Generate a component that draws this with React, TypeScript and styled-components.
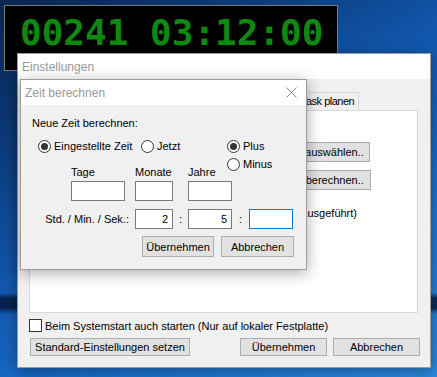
import React from 'react';
import styled, { createGlobalStyle } from 'styled-components';

const GlobalStyle = createGlobalStyle`
  html, body { margin: 0; padding: 0; }
  body {
    width: 437px;
    height: 377px;
    overflow: hidden;
    font-family: "Liberation Sans", Arial, sans-serif;
    font-size: 11px;
    color: #000;
  }
  * { box-sizing: border-box; }
`;

const Desktop = styled.div`
  position: relative;
  width: 437px;
  height: 377px;
  overflow: hidden;
  background:
    linear-gradient(180deg, transparent 0, transparent 293px, rgba(4, 22, 55, 0.8) 298px, rgba(4, 22, 55, 0.8) 308px, transparent 314px),
    linear-gradient(150deg, #0a2450 0%, #0c3a78 22%, #1257ad 45%, #1a70cc 70%, #2c88dc 100%);
`;

/* ---------- Clock window ---------- */
const ClockWindow = styled.div`
  position: absolute;
  left: 4px;
  top: 5px;
  width: 334px;
  height: 66px;
  background: #000;
  border: 1px solid #7a7a7a;
`;

const ClockText = styled.div`
  padding: 9px 0 0 15px;
  font-family: "DejaVu Sans Mono", monospace;
  font-weight: bold;
  font-size: 36px;
  line-height: 36px;
  color: #0f8a10;
  white-space: pre;
`;

/* ---------- Generic window parts ---------- */
const Window = styled.div<{ $left: number; $top: number; $w: number; $h: number }>`
  position: absolute;
  left: ${(p) => p.$left}px;
  top: ${(p) => p.$top}px;
  width: ${(p) => p.$w}px;
  height: ${(p) => p.$h}px;
  display: flex;
  flex-direction: column;
  background: #f0f0f0;
  border: 1px solid #9c9c9c;
  box-shadow: 0 3px 14px rgba(0, 0, 0, 0.35);
`;

const TitleBar = styled.div<{ $h: number }>`
  height: ${(p) => p.$h}px;
  flex: none;
  display: flex;
  align-items: center;
  justify-content: space-between;
  padding: 0 9px 0 4px;
  background: #fff;
  color: #999;
  font-size: 12px;
`;

const TitleText = styled.span`
  padding-top: 1px;
`;

const Button = styled.div<{ $w: number; $h?: number }>`
  width: ${(p) => p.$w}px;
  height: ${(p) => p.$h ?? 21}px;
  flex: none;
  display: flex;
  align-items: center;
  justify-content: center;
  background: #e1e1e1;
  border: 1px solid #adadad;
  white-space: nowrap;
  overflow: hidden;
`;

/* ---------- Settings window ---------- */
const SettingsBody = styled.div`
  flex: 1;
  display: flex;
  flex-direction: column;
  padding: 13px 10px 0 11px;
`;

const TabStrip = styled.div`
  display: flex;
  height: 18px;
  padding-left: 2px;
`;

const Tab = styled.div<{ $w: number }>`
  width: ${(p) => p.$w}px;
  height: 19px;
  flex: none;
  padding: 2px 0 0 4px;
  border: 1px solid #d9d9d9;
  border-bottom: none;
  background: #f0f0f0;
  white-space: nowrap;
  overflow: hidden;
  margin-right: -1px;
  letter-spacing: -0.5px;
`;

const TabPanel = styled.div`
  height: 203px;
  margin-right: 2px;
  background: #fff;
  border: 1px solid #d9d9d9;
  display: flex;
  flex-direction: column;
  padding: 31px 47px 0 10px;
`;

const PanelRow = styled.div<{ $gap: number; $pr?: number }>`
  display: flex;
  justify-content: flex-end;
  align-items: center;
  margin-top: ${(p) => p.$gap}px;
  padding-right: ${(p) => Math.max(p.$pr ?? 0, 0)}px;
  margin-right: ${(p) => Math.min(p.$pr ?? 0, 0)}px;
  white-space: nowrap;
`;

const PanelText = styled.div`
  height: 14px;
  line-height: 14px;
  white-space: nowrap;
`;

const CheckRow = styled.div`
  display: flex;
  align-items: center;
  gap: 3px;
  margin-top: 6px;
  height: 13px;
  white-space: nowrap;
`;

const CheckBox = styled.span`
  width: 13px;
  height: 13px;
  flex: none;
  background: #fff;
  border: 1px solid #333;
`;

const FooterRow = styled.div`
  display: flex;
  align-items: center;
  margin-top: 6px;
  padding-left: 1px;
`;

const FooterRight = styled.div`
  margin-left: auto;
  display: flex;
  gap: 6px;
`;

/* ---------- Dialog ---------- */
const DialogBody = styled.div`
  flex: 1;
  display: flex;
  flex-direction: column;
  padding: 10px 12px 0 11px;
`;

const Heading = styled.div`
  height: 16px;
  line-height: 16px;
`;

const RadioRow = styled.div`
  display: flex;
  align-items: flex-start;
  height: 14px;
  margin-top: 8px;
  padding-left: 6px;
`;

const RadioItem = styled.div<{ $w?: number }>`
  display: flex;
  align-items: center;
  gap: 3px;
  height: 14px;
  flex: none;
  width: ${(p) => (p.$w ? `${p.$w}px` : 'auto')};
  white-space: nowrap;
`;

const RadioCircle = styled.span<{ $checked?: boolean }>`
  width: 13px;
  height: 13px;
  flex: none;
  border-radius: 50%;
  border: 1px solid #333;
  background: #fff;
  display: flex;
  align-items: center;
  justify-content: center;
  &::after {
    content: '';
    display: ${(p) => (p.$checked ? 'block' : 'none')};
    width: 7px;
    height: 7px;
    border-radius: 50%;
    background: #333;
  }
`;

const SignColumn = styled.div`
  display: flex;
  flex-direction: column;
  gap: 4px;
`;

const DateGrid = styled.div`
  display: grid;
  grid-template-columns: 64px 53px 44px;
  grid-template-rows: 14px 20px;
  row-gap: 2px;
  margin-top: 12px;
  padding-left: 39px;
`;

const FieldLabel = styled.div`
  line-height: 14px;
  white-space: nowrap;
`;

const Field = styled.div<{ $w: number; $focus?: boolean }>`
  width: ${(p) => p.$w}px;
  height: 20px;
  background: #fff;
  border: 1px solid ${(p) => (p.$focus ? '#0078d7' : '#7a7a7a')};
  display: flex;
  align-items: center;
  justify-content: flex-end;
  padding-right: 4px;
`;

const TimeRow = styled.div`
  display: flex;
  align-items: center;
  height: 20px;
  margin-top: 8px;
`;

const TimeLabel = styled.div`
  width: 103px;
  flex: none;
  text-align: right;
  padding-right: 6px;
  white-space: nowrap;
`;

const Colon = styled.div<{ $w: number }>`
  width: ${(p) => p.$w}px;
  flex: none;
  text-align: center;
`;

const DialogButtons = styled.div`
  display: flex;
  justify-content: flex-end;
  gap: 7px;
  margin-top: 7px;
`;

const CloseIcon = () => (
  <svg width="11" height="11" viewBox="0 0 11 11">
    <path d="M0.5 0.5 L10.5 10.5 M10.5 0.5 L0.5 10.5" stroke="#8a8a8a" strokeWidth="1" fill="none" />
  </svg>
);

const tabs: { label: string; w: number }[] = [
  { label: 'Allgemein', w: 66 },
  { label: 'Anzeige', w: 58 },
  { label: 'Alarm', w: 48 },
  { label: 'Sound', w: 50 },
  { label: 'Aktion', w: 48 },
  { label: 'Task planen', w: 63 },
];

export default function App() {
  return (
    <>
      <GlobalStyle />
      <Desktop>
        <ClockWindow>
          <ClockText>00241 03:12:00</ClockText>
        </ClockWindow>

        <Window $left={17} $top={53} $w={414} $h={315}>
          <TitleBar $h={25}>
            <TitleText>Einstellungen</TitleText>
          </TitleBar>
          <SettingsBody>
            <TabStrip>
              {tabs.map((t) => (
                <Tab key={t.label} $w={t.w}>
                  {t.label}
                </Tab>
              ))}
            </TabStrip>
            <TabPanel>
              <PanelRow $gap={0}>
                <Button $w={109} $h={20}>Zielzeit auswählen..</Button>
              </PanelRow>
              <PanelRow $gap={8} $pr={-1}>
                <Button $w={94} $h={20}>Zeit berechnen..</Button>
              </PanelRow>
              <PanelRow $gap={16} $pr={13}>
                <PanelText>(Task wird einmalig ausgeführt)</PanelText>
              </PanelRow>
            </TabPanel>
            <CheckRow>
              <CheckBox />
              <span>Beim Systemstart auch starten (Nur auf lokaler Festplatte)</span>
            </CheckRow>
            <FooterRow>
              <Button $w={160} $h={18}>Standard-Einstellungen setzen</Button>
              <FooterRight>
                <Button $w={87} $h={18}>Übernehmen</Button>
                <Button $w={87} $h={18}>Abbrechen</Button>
              </FooterRight>
            </FooterRow>
          </SettingsBody>
        </Window>

        <Window $left={20} $top={79} $w={287} $h={191}>
          <TitleBar $h={25}>
            <TitleText>Zeit berechnen</TitleText>
            <CloseIcon />
          </TitleBar>
          <DialogBody>
            <Heading>Neue Zeit berechnen:</Heading>
            <RadioRow>
              <RadioItem $w={103}>
                <RadioCircle $checked />
                <span>Eingestellte Zeit</span>
              </RadioItem>
              <RadioItem $w={86}>
                <RadioCircle />
                <span>Jetzt</span>
              </RadioItem>
              <SignColumn>
                <RadioItem>
                  <RadioCircle $checked />
                  <span>Plus</span>
                </RadioItem>
                <RadioItem>
                  <RadioCircle />
                  <span>Minus</span>
                </RadioItem>
              </SignColumn>
            </RadioRow>
            <DateGrid>
              <FieldLabel>Tage</FieldLabel>
              <FieldLabel>Monate</FieldLabel>
              <FieldLabel>Jahre</FieldLabel>
              <Field $w={54} />
              <Field $w={38} />
              <Field $w={44} />
            </DateGrid>
            <TimeRow>
              <TimeLabel>Std. / Min. / Sek.:</TimeLabel>
              <Field $w={38}>2</Field>
              <Colon $w={15}>:</Colon>
              <Field $w={44}>5</Field>
              <Colon $w={17}>:</Colon>
              <Field $w={44} $focus />
            </TimeRow>
            <DialogButtons>
              <Button $w={72}>Übernehmen</Button>
              <Button $w={73}>Abbrechen</Button>
            </DialogButtons>
          </DialogBody>
        </Window>
      </Desktop>
    </>
  );
}
